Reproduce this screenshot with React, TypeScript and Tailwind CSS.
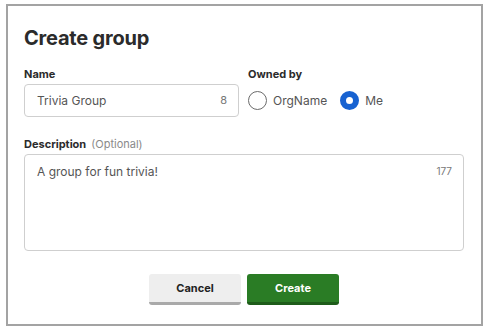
import { useState } from "react";

const FONT = { fontFamily: "Inter, 'Open Sans', sans-serif" };

export default function App() {
  const [owner, setOwner] = useState("me");

  return (
    <div className="w-[489px] h-[331px] bg-white pt-[4px] pl-[6px]" style={FONT}>
      <div className="w-[477px] h-[322px] border-2 border-[#a3a3a3] pl-[16px] pr-[17px] pt-[19px]">
        <h1 className="text-[20px] leading-[26px] font-bold text-[#2b2b2b] tracking-[-0.2px]">Create group</h1>

        <div className="flex gap-[9px] mt-[16px]">
          <div className="w-[215px]">
            <label className="block text-[11px] leading-[14px] font-bold text-[#2b2b2b]">Name</label>
            <div className="mt-[3px] h-[33px] border border-[#cfcfcf] rounded-[4px] flex items-center justify-between pl-[12px] pr-[11px]">
              <span className="text-[12px] text-[#555]">Trivia Group</span>
              <span className="text-[11px] text-[#777]">8</span>
            </div>
          </div>
          <div>
            <label className="block text-[11px] leading-[14px] font-bold text-[#2b2b2b]">Owned by</label>
            <div className="mt-[3px] h-[33px] flex items-center">
              <button onClick={() => setOwner("org")} className="flex items-center gap-[6px]">
                <span
                  className={
                    owner === "org"
                      ? "w-[19px] h-[19px] rounded-full border-[6px] border-[#1762d1] bg-white"
                      : "w-[19px] h-[19px] rounded-full border border-[#6b6b6b] bg-white"
                  }
                />
                <span className="text-[12px] text-[#555]">OrgName</span>
              </button>
              <button onClick={() => setOwner("me")} className="flex items-center gap-[6px] ml-[13px]">
                <span
                  className={
                    owner === "me"
                      ? "w-[19px] h-[19px] rounded-full border-[6px] border-[#1762d1] bg-white"
                      : "w-[19px] h-[19px] rounded-full border border-[#6b6b6b] bg-white"
                  }
                />
                <span className="text-[12px] text-[#555]">Me</span>
              </button>
            </div>
          </div>
        </div>

        <div className="mt-[20px]">
          <label className="block text-[11px] leading-[14px] text-[#2b2b2b]">
            <span className="font-bold">Description</span>
            <span className="ml-[5px] text-[#8a8a8a]">(Optional)</span>
          </label>
          <div className="mt-[3px] h-[97px] border border-[#cfcfcf] rounded-[4px] flex justify-between pl-[12px] pr-[11px] pt-[8px]">
            <span className="text-[12px] text-[#555]">A group for fun trivia!</span>
            <span className="text-[10px] text-[#777] pt-[1px]">177</span>
          </div>
        </div>

        <div className="flex justify-center gap-[6px] mt-[23px]">
          <button className="w-[92px] h-[31px] rounded-[3px] bg-[#eeeeee] border-b-[3px] border-[#a9a9a9] text-[11px] font-bold text-[#222]">
            Cancel
          </button>
          <button className="w-[92px] h-[31px] rounded-[3px] bg-[#2a7c25] border-b-[3px] border-[#1e5c1a] text-[11px] font-bold text-white">
            Create
          </button>
        </div>
      </div>
    </div>
  );
}
